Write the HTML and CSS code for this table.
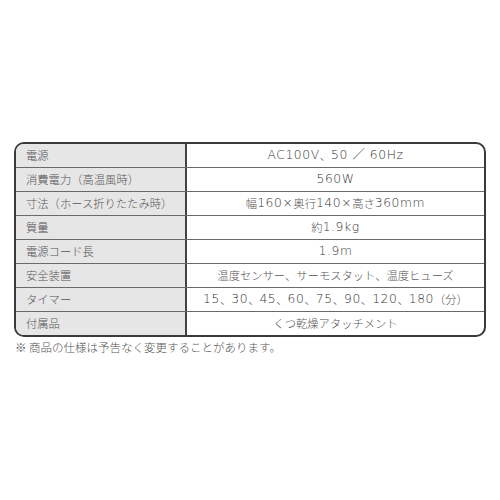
FILE: index.html
```html
<!DOCTYPE html>
<html lang="ja">
<head>
<meta charset="utf-8">
<link rel="stylesheet" href="styles.css">
</head>
<body>
<div class="page">
  <div class="spec">
    <div class="row"><div class="label">電源</div><div class="value"><span class="lat">AC100V</span>、<span class="lat">50 ／ 60Hz</span></div></div>
    <div class="row"><div class="label">消費電力（高温風時）</div><div class="value"><span class="lat">560W</span></div></div>
    <div class="row"><div class="label">寸法（ホース折りたたみ時）</div><div class="value">幅<span class="lat">160×</span>奥行<span class="lat">140×</span>高さ<span class="lat">360mm</span></div></div>
    <div class="row"><div class="label">質量</div><div class="value">約<span class="lat">1.9kg</span></div></div>
    <div class="row"><div class="label">電源コード長</div><div class="value"><span class="lat">1.9m</span></div></div>
    <div class="row"><div class="label">安全装置</div><div class="value">温度センサー、サーモスタット、温度ヒューズ</div></div>
    <div class="row"><div class="label">タイマー</div><div class="value"><span class="lat">15</span>、<span class="lat">30</span>、<span class="lat">45</span>、<span class="lat">60</span>、<span class="lat">75</span>、<span class="lat">90</span>、<span class="lat">120</span>、<span class="lat">180</span>（分）</div></div>
    <div class="row"><div class="label">付属品</div><div class="value">くつ乾燥アタッチメント</div></div>
  </div>
  <p class="note">※ 商品の仕様は予告なく変更することがあります。</p>
</div>
</body>
</html>
```

FILE: styles.css
```css
html, body {
  margin: 0;
  padding: 0;
  background: #ffffff;
}
.page {
  width: 500px;
  height: 500px;
  box-sizing: border-box;
  padding: 142px 14px 0 14px;
  font-family: "Noto Sans CJK JP", "Noto Sans", sans-serif;
  font-weight: 300;
  color: #555555;
}
.spec {
  border: 2px solid #3a3a3a;
  border-radius: 10px;
  overflow: hidden;
  display: flex;
  flex-direction: column;
}
.row {
  display: grid;
  grid-template-columns: 171px 1fr;
  height: 23px;
  border-top: 1px solid #6a6a6a;
}
.row:first-child {
  border-top: none;
}
.label {
  background: #e6e6e6;
  border-right: 2px solid #444444;
  display: flex;
  align-items: center;
  padding-left: 10px;
  font-size: 11.3px;
  line-height: 1;
  white-space: nowrap;
}
.value {
  display: flex;
  align-items: center;
  justify-content: center;
  font-size: 11.3px;
  line-height: 1;
  white-space: pre;
}
.lat {
  font-family: "DejaVu Sans", "Noto Sans CJK JP", sans-serif;
  font-weight: 300;
  font-size: 12.3px;
  letter-spacing: 0.6px;
  color: #333333;
}
.note {
  margin: 3px 0 0 1px;
  font-size: 11.5px;
  line-height: 14px;
  color: #555555;
}
```
